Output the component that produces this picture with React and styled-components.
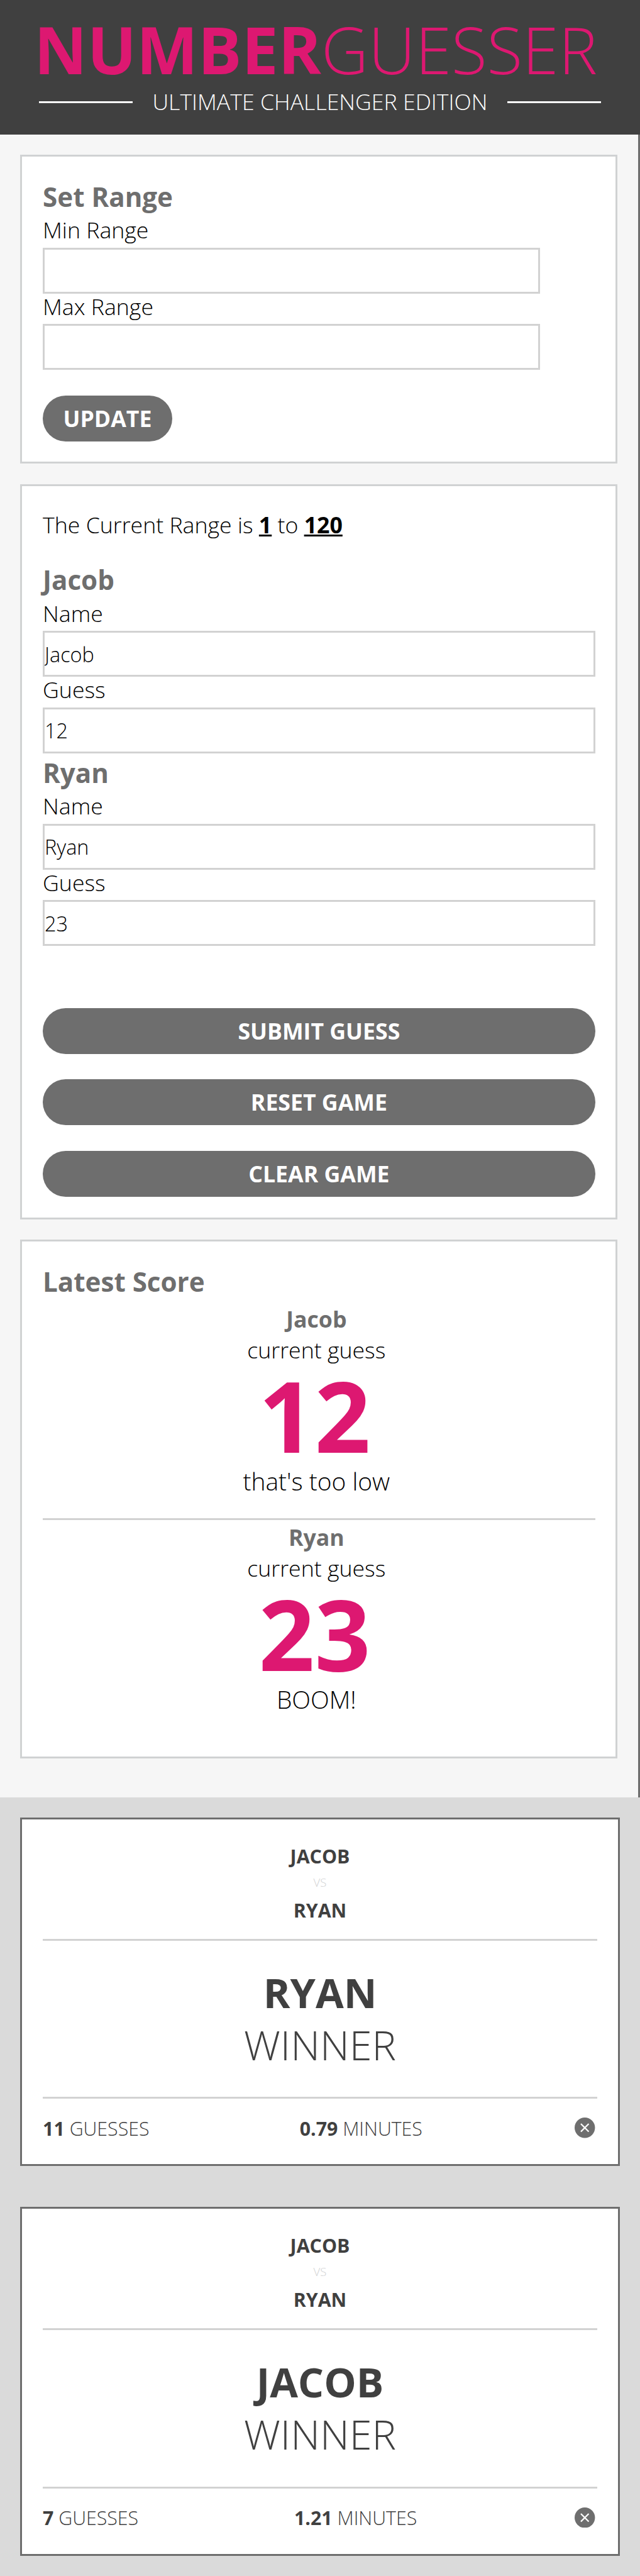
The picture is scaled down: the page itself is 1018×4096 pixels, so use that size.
import React from "react";
import styled, { createGlobalStyle } from "styled-components";

const u = (n) => `${(n * 0.81045).toFixed(3)}px`;
const inset = `calc(${u(44)} - 3px)`;

const color = {
  pink: "#dd1871",
  dark: "#404040",
  gray: "#6e6e6e",
  line: "#d0d2d3",
  rule: "#d2d2d2",
  panel: "#f6f6f6",
  history: "#dadada",
};

const GlobalStyle = createGlobalStyle`
  * { box-sizing: border-box; margin: 0; padding: 0; }
  body {
    margin: 0;
    background: ${color.history};
    font-family: "Open Sans", "Noto Sans", sans-serif;
    font-weight: 300;
    color: #000;
  }
`;

const Page = styled.div`
  width: 100%;
  height: 4096px;
  overflow: hidden;
  background: ${color.history};
`;

const Header = styled.header`
  height: ${u(264)};
  padding: ${u(31.3)} ${u(76)} 0;
  background: ${color.dark};
`;

const Title = styled.h1`
  margin-left: ${u(-9)};
  font-size: ${u(128)};
  line-height: ${u(130)};
  font-weight: 300;
  color: ${color.pink};
  white-space: nowrap;
`;

const Heavy = styled.span`
  font-weight: 700;
`;

const Subtitle = styled.div`
  display: flex;
  align-items: center;
  justify-content: space-between;
  margin-top: ${u(7.7)};
  font-size: ${u(44)};
  line-height: ${u(60)};
  color: #fff;
  white-space: nowrap;
`;

const Dash = styled.span`
  width: ${u(184)};
  height: 3px;
  margin-top: ${u(2.8)};
  background: #fff;
`;

const Game = styled.main`
  display: flex;
  flex-direction: column;
  gap: ${u(40)};
  height: ${u(3262)};
  padding: ${u(40)} calc(${u(44)} - 3px) 0 ${u(40)};
  background: ${color.panel};
  border-right: 3px solid ${color.gray};
`;

const Card = styled.section`
  height: ${(p) => u(p.$h)};
  padding: ${inset};
  background: #fff;
  border: 3px solid ${color.line};
`;

const Heading = styled.h2`
  height: ${u(78)};
  font-size: ${u(52)};
  line-height: ${u(76)};
  font-weight: 700;
  color: ${color.gray};
`;

const Field = styled.div`
  height: ${u(150)};
`;

const Label = styled.label`
  display: block;
  height: ${u(60)};
  font-size: ${u(44)};
  line-height: ${u(51)};
`;

const Input = styled.input`
  display: block;
  width: ${(p) => (p.$w ? u(p.$w) : "100%")};
  height: ${u(90)};
  padding: 0;
  border: 3px solid ${color.rule};
  border-radius: 0;
  outline: none;
  background: #fff;
  font: 300 ${u(40)} "Open Sans", sans-serif;
  color: #000;
`;

const Button = styled.button`
  display: block;
  width: ${(p) => (p.$w ? u(p.$w) : "100%")};
  height: ${u(90)};
  margin-top: ${u(50)};
  border: 0;
  border-radius: ${u(45)};
  background: ${color.gray};
  color: #fff;
  font: 700 ${u(44)} / ${u(90)} "Open Sans", sans-serif;
`;

const Actions = styled.div`
  padding-top: ${u(72)};
`;

const RangeLine = styled.p`
  height: ${u(106)};
  font-size: ${u(44)};
  line-height: ${u(71)};
`;

const Bound = styled.strong`
  font-weight: 700;
  text-decoration: underline;
`;

const Score = styled.div`
  height: ${(p) => u(p.$rule ? 428 : 424)};
  padding: ${u(4.5)} ${u(10)} 0 0;
  text-align: center;
  border-bottom: ${(p) => (p.$rule ? `3px solid ${color.rule}` : 0)};
`;

const ScoreName = styled.h3`
  font-size: ${u(44)};
  line-height: ${u(60)};
  font-weight: 700;
  color: ${color.gray};
`;

const ScoreText = styled.p`
  font-size: ${(p) => u(p.$size)};
  line-height: ${(p) => u(p.$line)};
`;

const ScoreNumber = styled.div`
  margin-bottom: ${u(-2)};
  padding-right: ${u(7)};
  font-size: ${u(192)};
  line-height: ${u(196)};
  font-weight: 700;
  color: ${color.pink};
`;

const History = styled.aside`
  display: flex;
  flex-direction: column;
  gap: ${u(80)};
  padding: ${u(40)};
`;

const Result = styled.article`
  height: ${u(684)};
  padding: ${inset};
  border: 3px solid ${color.gray};
  background: #fff;
  color: ${color.dark};
  text-align: center;
`;

const Players = styled.div`
  height: ${u(198)};
  padding-top: ${u(1.5)};
  border-bottom: 3px solid ${color.rule};
`;

const Player = styled.div`
  font-size: ${u(37.44)};
  line-height: ${u(62)};
  font-weight: 700;
`;

const Versus = styled.div`
  margin: ${u(-1.4)} 0 ${u(4.5)};
  font-size: ${u(23)};
  line-height: ${u(41)};
  color: ${color.line};
`;

const Winner = styled.div`
  height: ${u(310)};
  padding-top: ${u(50.5)};
  border-bottom: 3px solid ${color.rule};
  font-size: ${u(80)};
  line-height: ${u(102)};
`;

const Stats = styled.footer`
  display: flex;
  align-items: center;
  justify-content: space-between;
  padding-top: ${u(29.4)};
  font-size: ${u(37.44)};
  line-height: ${u(52)};
`;

const Stat = styled.span`
  padding-top: ${u(3.2)};
`;

const Close = styled.button`
  display: flex;
  margin: 0 ${u(4)};
  border: 0;
  background: none;

  svg {
    display: block;
    width: ${u(40)};
    height: ${u(40)};
  }
`;

const TextField = ({ label, id, ...rest }) => (
  <Field>
    <Label htmlFor={id}>{label}</Label>
    <Input id={id} {...rest} />
  </Field>
);

const PlayerForm = ({ id, name, guess }) => (
  <div>
    <Heading>{name}</Heading>
    <TextField label="Name" id={`${id}-name`} defaultValue={name} />
    <TextField label="Guess" id={`${id}-guess`} defaultValue={guess} />
  </div>
);

const ScoreEntry = ({ name, guess, message, rule }) => (
  <Score $rule={rule}>
    <ScoreName>{name}</ScoreName>
    <ScoreText $size={44} $line={60}>current guess</ScoreText>
    <ScoreNumber>{guess}</ScoreNumber>
    <ScoreText $size={48} $line={66}>{message}</ScoreText>
  </Score>
);

const ResultCard = ({ winner, guesses, minutes }) => (
  <Result>
    <Players>
      <Player>JACOB</Player>
      <Versus>VS</Versus>
      <Player>RYAN</Player>
    </Players>
    <Winner>
      <Heavy as="div">{winner}</Heavy>
      <div>WINNER</div>
    </Winner>
    <Stats>
      <Stat><Heavy>{guesses}</Heavy> GUESSES</Stat>
      <Stat><Heavy>{minutes}</Heavy> MINUTES</Stat>
      <Close aria-label="Remove">
        <svg viewBox="0 0 40 40">
          <circle cx="20" cy="20" r="20" fill={color.gray} />
          <path d="M12.3 12.3 27.7 27.7M27.7 12.3 12.3 27.7" stroke="#fff" strokeWidth="2.8" />
        </svg>
      </Close>
    </Stats>
  </Result>
);

export default function App() {
  return (
    <Page>
      <GlobalStyle />
      <Header>
        <Title><Heavy>NUMBER</Heavy>GUESSER</Title>
        <Subtitle>
          <Dash />
          <span>ULTIMATE CHALLENGER EDITION</span>
          <Dash />
        </Subtitle>
      </Header>
      <Game>
        <Card $h={606}>
          <Heading>Set Range</Heading>
          <TextField label="Min Range" id="min" $w={976} />
          <TextField label="Max Range" id="max" $w={976} />
          <Button $w={254}>UPDATE</Button>
        </Card>
        <Card $h={1442}>
          <RangeLine>
            The Current Range is <Bound>1</Bound> to <Bound>120</Bound>
          </RangeLine>
          <PlayerForm id="one" name="Jacob" guess="12" />
          <PlayerForm id="two" name="Ryan" guess="23" />
          <Actions>
            <Button>SUBMIT GUESS</Button>
            <Button>RESET GAME</Button>
            <Button>CLEAR GAME</Button>
          </Actions>
        </Card>
        <Card $h={1018}>
          <Heading>Latest Score</Heading>
          <ScoreEntry name="Jacob" guess="12" message="that's too low" rule />
          <ScoreEntry name="Ryan" guess="23" message="BOOM!" />
        </Card>
      </Game>
      <History>
        <ResultCard winner="RYAN" guesses="11" minutes="0.79" />
        <ResultCard winner="JACOB" guesses="7" minutes="1.21" />
      </History>
    </Page>
  );
}
